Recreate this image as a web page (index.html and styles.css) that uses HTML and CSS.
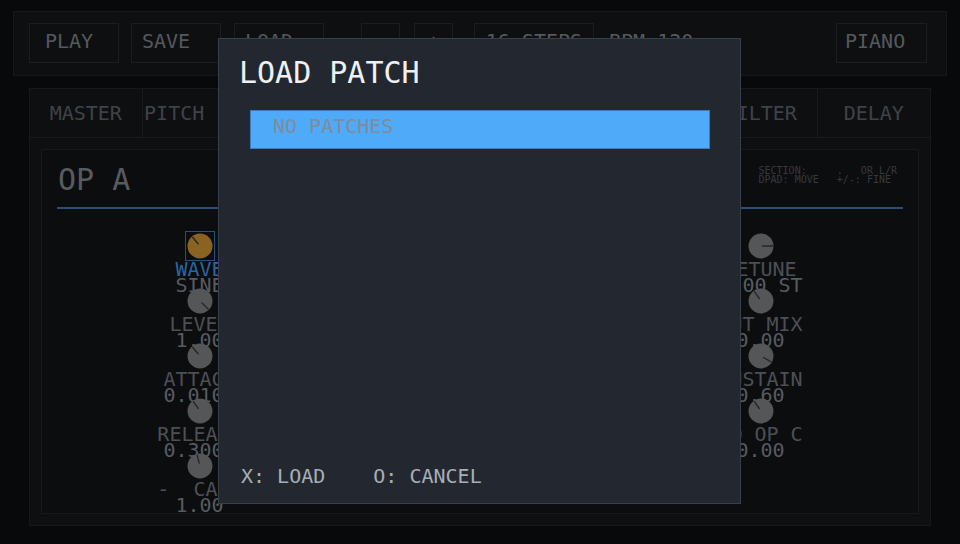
FILE: index.html
```html
<!DOCTYPE html>
<html lang="en">
<head>
<meta charset="utf-8">
<title>FM Synth - Load Patch</title>
<link rel="stylesheet" href="styles.css">
</head>
<body>
<div class="app">
  <header class="topbar">
    <div class="btn btn-play">PLAY</div>
    <div class="btn btn-file">SAVE</div>
    <div class="btn btn-file btn-load">LOAD</div>
    <div class="btn btn-step btn-minus">-</div>
    <div class="btn btn-step btn-plus">+</div>
    <div class="btn btn-steps">16 STEPS</div>
    <div class="bpm">BPM 120</div>
    <div class="btn btn-preset">PIANO</div>
  </header>

  <main class="editor">
    <nav class="tabs">
      <div class="tab">MASTER</div>
      <div class="tab">PITCH ENV</div>
      <div class="tab tab-active">OP A</div>
      <div class="tab">OP B</div>
      <div class="tab">OP C</div>
      <div class="tab">OP D</div>
      <div class="tab">FILTER</div>
      <div class="tab">DELAY</div>
    </nav>
    <div class="editor-body">
      <section class="op">
        <div class="op-head">
          <h2 class="op-title">OP A</h2>
          <pre class="hints">SECTION:     .   OR L/R
DPAD: MOVE   +/-: FINE</pre>
        </div>
        <div class="knob-grid">
          <div class="knob-col">
            <div class="param param-selected">
              <svg class="knob" viewBox="0 0 26 26" width="26" height="26"><circle cx="13" cy="13" r="12.5" class="knob-face knob-face-active"/><line x1="11.1" y1="10.7" x2="5.6" y2="4.2" class="knob-mark"/></svg>
              <div class="param-label">WAVE</div>
              <div class="param-value">SINE</div>
            </div>
            <div class="param">
              <svg class="knob" viewBox="0 0 26 26" width="26" height="26"><circle cx="13" cy="13" r="12.5" class="knob-face"/><line x1="15.1" y1="15.1" x2="21.1" y2="21.1" class="knob-mark"/></svg>
              <div class="param-label">LEVEL</div>
              <div class="param-value">1.00</div>
            </div>
            <div class="param">
              <svg class="knob" viewBox="0 0 26 26" width="26" height="26"><circle cx="13" cy="13" r="12.5" class="knob-face"/><line x1="11.1" y1="10.7" x2="5.6" y2="4.2" class="knob-mark"/></svg>
              <div class="param-label">ATTACK</div>
              <div class="param-value">0.010S</div>
            </div>
            <div class="param">
              <svg class="knob" viewBox="0 0 26 26" width="26" height="26"><circle cx="13" cy="13" r="12.5" class="knob-face"/><line x1="11.3" y1="10.5" x2="6.4" y2="3.6" class="knob-mark"/></svg>
              <div class="param-label">RELEASE</div>
              <div class="param-value">0.300S</div>
            </div>
            <div class="param">
              <svg class="knob" viewBox="0 0 26 26" width="26" height="26"><circle cx="13" cy="13" r="12.5" class="knob-face"/><line x1="12.2" y1="10.1" x2="10.2" y2="2.2" class="knob-mark"/></svg>
              <div class="param-label">-  CAR+</div>
              <div class="param-value">1.00</div>
            </div>
          </div>

          <div class="knob-col">
            <div class="param">
              <svg class="knob" viewBox="0 0 26 26" width="26" height="26"><circle cx="13" cy="13" r="12.5" class="knob-face"/><line x1="13" y1="10" x2="13" y2="1.5" class="knob-mark"/></svg>
              <div class="param-label">RATIO</div>
              <div class="param-value">1.00</div>
            </div>
            <div class="param">
              <svg class="knob" viewBox="0 0 26 26" width="26" height="26"><circle cx="13" cy="13" r="12.5" class="knob-face"/><line x1="11.1" y1="10.7" x2="5.6" y2="4.2" class="knob-mark"/></svg>
              <div class="param-label">VELOCITY</div>
              <div class="param-value">0.00</div>
            </div>
            <div class="param">
              <svg class="knob" viewBox="0 0 26 26" width="26" height="26"><circle cx="13" cy="13" r="12.5" class="knob-face"/><line x1="11.1" y1="10.7" x2="5.6" y2="4.2" class="knob-mark"/></svg>
              <div class="param-label">DECAY</div>
              <div class="param-value">0.200S</div>
            </div>
            <div class="param">
              <svg class="knob" viewBox="0 0 26 26" width="26" height="26"><circle cx="13" cy="13" r="12.5" class="knob-face"/><line x1="11.1" y1="10.7" x2="5.6" y2="4.2" class="knob-mark"/></svg>
              <div class="param-label">TO OP B</div>
              <div class="param-value">0.00</div>
            </div>
          </div>

          <div class="knob-col">
            <div class="param">
              <svg class="knob" viewBox="0 0 26 26" width="26" height="26"><circle cx="13" cy="13" r="12.5" class="knob-face"/><line x1="13" y1="10" x2="13" y2="1.5" class="knob-mark"/></svg>
              <div class="param-label">FINE</div>
              <div class="param-value">0.00</div>
            </div>
            <div class="param">
              <svg class="knob" viewBox="0 0 26 26" width="26" height="26"><circle cx="13" cy="13" r="12.5" class="knob-face"/><line x1="11.1" y1="10.7" x2="5.6" y2="4.2" class="knob-mark"/></svg>
              <div class="param-label">FEEDBACK</div>
              <div class="param-value">0.00</div>
            </div>
            <div class="param">
              <svg class="knob" viewBox="0 0 26 26" width="26" height="26"><circle cx="13" cy="13" r="12.5" class="knob-face"/><line x1="11.1" y1="10.7" x2="5.6" y2="4.2" class="knob-mark"/></svg>
              <div class="param-label">HOLD</div>
              <div class="param-value">0.000S</div>
            </div>
            <div class="param">
              <svg class="knob" viewBox="0 0 26 26" width="26" height="26"><circle cx="13" cy="13" r="12.5" class="knob-face"/><line x1="11.1" y1="10.7" x2="5.6" y2="4.2" class="knob-mark"/></svg>
              <div class="param-label">TO OP A</div>
              <div class="param-value">0.00</div>
            </div>
          </div>

          <div class="knob-col">
            <div class="param">
              <svg class="knob" viewBox="0 0 26 26" width="26" height="26"><circle cx="13" cy="13" r="12.5" class="knob-face"/><line x1="14.5" y1="13" x2="25" y2="13" class="knob-mark"/></svg>
              <div class="param-label">DETUNE</div>
              <div class="param-value">0.00 ST</div>
            </div>
            <div class="param">
              <svg class="knob" viewBox="0 0 26 26" width="26" height="26"><circle cx="13" cy="13" r="12.5" class="knob-face"/><line x1="11.3" y1="10.5" x2="6.4" y2="3.6" class="knob-mark"/></svg>
              <div class="param-label">OUT MIX</div>
              <div class="param-value">0.00</div>
            </div>
            <div class="param">
              <svg class="knob" viewBox="0 0 26 26" width="26" height="26"><circle cx="13" cy="13" r="12.5" class="knob-face"/><line x1="15.6" y1="14.5" x2="23" y2="18.8" class="knob-mark"/></svg>
              <div class="param-label">SUSTAIN</div>
              <div class="param-value">0.60</div>
            </div>
            <div class="param">
              <svg class="knob" viewBox="0 0 26 26" width="26" height="26"><circle cx="13" cy="13" r="12.5" class="knob-face"/><line x1="11.3" y1="10.5" x2="6.4" y2="3.6" class="knob-mark"/></svg>
              <div class="param-label">TO OP C</div>
              <div class="param-value">0.00</div>
            </div>
          </div>
        </div>
      </section>
    </div>
  </main>
</div>

<div class="modal" role="dialog" aria-label="Load patch">
  <h1 class="modal-title">LOAD PATCH</h1>
  <ul class="patch-list">
    <li class="patch-item patch-item-selected">NO PATCHES</li>
  </ul>
  <div class="modal-footer">
    <span>X: LOAD</span>
    <span>O: CANCEL</span>
  </div>
</div>
</body>
</html>
```

FILE: styles.css
```css
* {
  box-sizing: border-box;
}

html, body {
  margin: 0;
  padding: 0;
}

body {
  width: 960px;
  height: 544px;
  overflow: hidden;
  background: #08090b;
  font-family: "DejaVu Sans Mono", "Liberation Mono", monospace;
  font-size: 20px;
  line-height: 20px;
  color: #55595e;
}

.app {
  padding-top: 11px;
}

/* ---------- top bar ---------- */
.topbar {
  margin: 0 13px;
  height: 65px;
  background: #0e0f11;
  border: 1px solid #16181b;
  display: flex;
  align-items: flex-start;
  padding: 11px 19px 0 15px;
}

.btn {
  height: 40px;
  border: 1px solid #1b1d21;
  background: #0e0f11;
  padding-top: 7px;
  line-height: 20px;
  color: #55595e;
  white-space: pre;
  flex-shrink: 0;
}

.btn-play {
  width: 90px;
  padding-left: 15px;
}

.btn-file {
  width: 90px;
  margin-left: 12px;
  padding-left: 10px;
}

.btn-load {
  margin-left: 13px;
}

.btn-step {
  width: 39px;
  text-align: center;
}

.btn-minus {
  margin-left: 37px;
}

.btn-plus {
  margin-left: 14px;
}

.btn-steps {
  width: 120px;
  margin-left: 21px;
  text-align: center;
}

.bpm {
  margin-left: 15px;
  padding-top: 8px;
  line-height: 20px;
  color: #55595e;
}

.btn-preset {
  width: 91px;
  margin-left: auto;
  padding-left: 8px;
}

/* ---------- editor ---------- */
.editor {
  margin: 12px 29px 0;
  height: 438px;
  background: #0e0f11;
  border: 1px solid #16181b;
  display: flex;
  flex-direction: column;
}

.tabs {
  display: grid;
  grid-template-columns: repeat(8, 1fr);
  height: 49px;
  flex-shrink: 0;
  border-bottom: 1px solid #191b1e;
}

.tab {
  border-right: 1px solid #191b1e;
  padding-top: 14px;
  text-align: center;
  white-space: nowrap;
  color: #3f4348;
}

.tab:last-child {
  border-right: none;
}

.editor-body {
  flex: 1;
  padding: 11px;
  display: flex;
}

.op {
  flex: 1;
  background: #0c0d0f;
  border: 1px solid #16181b;
  padding: 0 15px;
}

.op-head {
  display: flex;
  justify-content: space-between;
  align-items: flex-start;
  padding: 12px 0 10px;
  border-bottom: 2px solid #274f78;
}

.op-title {
  margin: 0 0 0 1px;
  font-size: 30px;
  line-height: 35px;
  font-weight: normal;
  color: #575b60;
}

.hints {
  margin: 4px 6px 0 0;
  font-family: "DejaVu Sans Mono", monospace;
  font-size: 10px;
  line-height: 9px;
  color: #363a40;
}

.knob-grid {
  display: grid;
  grid-template-columns: repeat(4, 187px);
  justify-content: center;
  margin-top: 24px;
}

.knob-col {
  display: block;
}

.param {
  height: 55px;
  text-align: center;
}

.knob {
  display: block;
  margin: 0 auto;
}

.param-selected .knob {
  outline: 1px solid #24507c;
  outline-offset: 1px;
}

.knob-face {
  fill: #555657;
}

.knob-face-active {
  fill: #8a6320;
}

.knob-mark {
  stroke: #262729;
  stroke-width: 1.4;
  stroke-linecap: round;
}

.param-label {
  margin-top: 2px;
  line-height: 16px;
  white-space: pre;
  color: #4c5055;
}

.param-selected .param-label {
  color: #2b65a0;
}

.param-value {
  line-height: 16px;
  white-space: pre;
  color: #575b60;
}

/* ---------- modal ---------- */
.modal {
  position: absolute;
  left: 218px;
  top: 38px;
  width: 523px;
  height: 466px;
  background: #232830;
  border: 1px solid #3a3f47;
  display: flex;
  flex-direction: column;
  padding: 16px 22px 17px 20px;
}

.modal-title {
  margin: 0;
  font-size: 30px;
  line-height: 36px;
  font-weight: normal;
  color: #eef1f4;
}

.patch-list {
  list-style: none;
  margin: 19px 0 0 11px;
  padding: 0;
  width: 460px;
}

.patch-item {
  height: 39px;
  padding: 5px 0 0 22px;
  line-height: 20px;
  color: #7f8c99;
}

.patch-item-selected {
  background: #4faaf9;
  border: 1px solid #3b7cc0;
}

.modal-footer {
  margin-top: auto;
  padding-left: 2px;
  display: flex;
  gap: 48px;
  line-height: 20px;
  color: #a7aeb7;
}
```
